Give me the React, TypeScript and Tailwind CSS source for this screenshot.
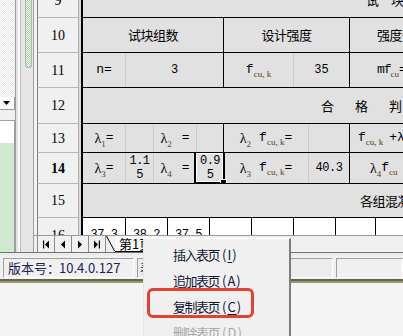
import React from "react";

const CJK = "font-['Noto_Sans_CJK_SC',sans-serif]";
const MONO = "font-['Liberation_Mono',monospace]";
const SERIF = "font-['Liberation_Serif',serif]";

function Sub({ children }: { children: React.ReactNode }) {
  return (
    <span className={`${SERIF} text-[9px] leading-none relative top-[4px] text-[#5a4020]`}>{children}</span>
  );
}

function Fcu({ k = true }: { k?: boolean }) {
  return (
    <span className="inline-flex items-baseline whitespace-nowrap">
      <span className={`${MONO} text-[13px]`}>f</span>
      <Sub>{k ? "cu, k" : "cu"}</Sub>
    </span>
  );
}

function Lam({ n }: { n: string }) {
  return (
    <span className="inline-flex items-baseline whitespace-nowrap">
      <span className={`${SERIF} text-[14px]`}>λ</span>
      <Sub>{n}</Sub>
    </span>
  );
}

function Row({
  h,
  num,
  bold,
  white,
  children,
}: {
  h: string;
  num: string;
  bold?: boolean;
  white?: boolean;
  children: React.ReactNode;
}) {
  return (
    <div className={`flex shrink-0 ${h}`}>
      <div
        className={`w-[42px] shrink-0 border-l border-l-[#7a7a7a] border-r border-r-[#b0b0b0] border-b border-b-[#b8b8b8] bg-[#f0f0f0] flex items-center justify-center ${SERIF} text-[14px] text-black ${bold ? "font-bold" : ""}`}
      >
        {num}
      </div>
      <div className="w-[2px] shrink-0 bg-[#dadada]" />
      <div className="w-[2px] shrink-0 bg-black" />
      <div className={`flex flex-1 min-w-0 overflow-hidden border-b border-black ${white ? "bg-white" : "bg-[#e1e1e1]"}`}>
        {children}
      </div>
    </div>
  );
}

const faint = "border-r border-r-[#cdcdcd]";
const black = "border-r border-r-black";
const cc = "shrink-0 flex items-center justify-center";

function NavBtn({ kind }: { kind: "first" | "prev" | "next" | "last" }) {
  return (
    <div className="w-[17px] shrink-0 h-full border-r border-r-[#8a8a8a] bg-[#f0f0f0] flex items-center justify-center">
      <svg width="8" height="9" viewBox="0 0 8 9">
        {kind === "first" && (
          <>
            <rect x="1" y="0.5" width="1.2" height="8" fill="#000" />
            <polygon points="7,0.5 7,8.5 3,4.5" fill="#000" />
          </>
        )}
        {kind === "prev" && <polygon points="6,0.5 6,8.5 2,4.5" fill="#000" />}
        {kind === "next" && <polygon points="2,0.5 2,8.5 6,4.5" fill="#000" />}
        {kind === "last" && (
          <>
            <polygon points="1,0.5 1,8.5 5,4.5" fill="#000" />
            <rect x="5.8" y="0.5" width="1.2" height="8" fill="#000" />
          </>
        )}
      </svg>
    </div>
  );
}

export default function App() {
  return (
    <div className={`relative w-[403px] h-[336px] overflow-hidden bg-[#f4f4f4] ${CJK}`}>
      {/* top section */}
      <div className="flex h-[252px]">
        {/* left panel */}
        <div className="w-[15px] shrink-0 flex flex-col">
          <div className="h-[97px] bg-[image:repeating-conic-gradient(#e6e6e6_0%_25%,#ffffff_0%_50%)] bg-[length:2px_2px]" />
          <div className="h-[13px] bg-white border-r border-b border-[#9a9a9a] flex items-center pl-[3px]">
            <svg width="7" height="4" viewBox="0 0 7 4">
              <polygon points="0,0 7,0 3.5,4" fill="#000" />
            </svg>
          </div>
          <div className="h-[10px] bg-[#f0f0f0]" />
          <div className="flex-1 flex flex-col border-t border-r border-[#a0a0a0]">
            <div className="h-[22px] bg-white" />
            <div className="flex-1 bg-[#d0e8d0]" />
          </div>
        </div>
        {/* splitter */}
        <div className="w-[5px] shrink-0 flex">
          <div className="w-[1px] bg-[#9c9c9c]" />
          <div className="w-[2px] bg-[#e2e2e2]" />
          <div className="w-[2px] bg-[#fbfbfb]" />
        </div>
        {/* scroll column */}
        <div className="w-[13px] shrink-0 flex border-l border-[#bdbdbd] bg-[#e6e6e6] pl-[4px]">
          <div className="w-[7px] h-[68px] rounded-b-[3px] border-x border-b border-[#a9b9a9] bg-[image:repeating-conic-gradient(#a8d4a8_0%_25%,#eef6ee_0%_50%)] bg-[length:2px_2px]" />
        </div>
        {/* sheet */}
        <div className="flex-1 min-w-0 flex flex-col">
          <div className="h-[235px] flex overflow-hidden">
            <div className="w-[4px] shrink-0 border-l border-[#a0a0a0] bg-[#f2f2f2]" />
            <div className="flex-1 min-w-0 flex flex-col overflow-hidden">
              {/* row 9 */}
              <Row h="h-[35px] -mt-[17px]" num="9">
                <div className={`flex-1 flex items-center pl-[283px] ${CJK} text-[13px] text-black whitespace-nowrap gap-[12px]`}>
                  <span>试</span>
                  <span>块</span>
                </div>
              </Row>
              {/* row 10 */}
              <Row h="h-[35px]" num="10">
                <div className={`w-[141px] ${cc} ${black} text-[13px] tracking-[-0.5px]`}>试块组数</div>
                <div className={`w-[126px] ${cc} ${black} text-[13px] tracking-[-0.5px]`}>设计强度</div>
                <div className="flex-1 flex items-center pl-[27px] text-[13px] tracking-[-0.5px] whitespace-nowrap">强度代表值</div>
              </Row>
              {/* row 11 */}
              <Row h="h-[35px]" num="11">
                <div className={`w-[43px] ${cc} ${faint} ${MONO} text-[13px]`}>n=</div>
                <div className={`w-[98px] ${cc} ${black} ${MONO} text-[12px]`}>3</div>
                <div className={`w-[70px] ${cc} ${faint}`}>
                  <Fcu />
                </div>
                <div className={`w-[56px] ${cc} ${black} ${MONO} text-[12px]`}>35</div>
                <div className="flex-1 flex items-center pl-[27px] whitespace-nowrap">
                  <span className={`${MONO} text-[13px] tracking-[-1px]`}>mf</span>
                  <Sub>cu</Sub>
                  <span className={`${MONO} text-[13px]`}>=</span>
                </div>
              </Row>
              {/* row 12 */}
              <Row h="h-[36px]" num="12">
                <div className="flex-1 flex items-center pl-[238px] gap-[21px] text-[13px] whitespace-nowrap">
                  <span>合</span>
                  <span>格</span>
                  <span>判</span>
                  <span>定</span>
                </div>
              </Row>
              {/* row 13 */}
              <Row h="h-[29px]" num="13">
                <div className={`w-[43px] ${cc} ${faint}`}>
                  <Lam n="1" />
                  <span className={`${MONO} text-[13px]`}>=</span>
                </div>
                <div className={`w-[28px] ${cc} ${faint}`} />
                <div className={`w-[43px] ${cc} ${faint} gap-[10px]`}>
                  <Lam n="2" />
                  <span className={`${MONO} text-[13px]`}>=</span>
                </div>
                <div className={`w-[27px] ${cc} ${black}`} />
                <div className={`w-[85px] ${cc} ${faint} gap-[8px]`}>
                  <Lam n="2" />
                  <span className="inline-flex items-baseline">
                    <Fcu />
                    <span className={`${MONO} text-[13px]`}>=</span>
                  </span>
                </div>
                <div className={`w-[41px] ${cc} ${black}`} />
                <div className="flex-1 flex items-center pl-[8px] whitespace-nowrap gap-[6px]">
                  <Fcu />
                  <span className={`${MONO} text-[13px]`}>+λ</span>
                </div>
              </Row>
              {/* row 14 */}
              <Row h="h-[31px]" num="14" bold>
                <div className={`w-[43px] ${cc} ${faint}`}>
                  <Lam n="3" />
                  <span className={`${MONO} text-[13px]`}>=</span>
                </div>
                <div className={`w-[28px] ${cc} ${faint} flex-col leading-[14px] ${MONO} text-[12px] tracking-[-0.5px]`}>
                  <span>1.1</span>
                  <span>5</span>
                </div>
                <div className={`w-[43px] ${cc} ${faint} gap-[10px]`}>
                  <Lam n="4" />
                  <span className={`${MONO} text-[13px]`}>=</span>
                </div>
                <div className={`w-[27px] ${cc} ${black} relative flex-col leading-[14px] ${MONO} text-[12px] tracking-[-0.5px]`}>
                  <span>0.9</span>
                  <span>5</span>
                  <div className="absolute left-[-3px] top-[-2px] right-[-2px] bottom-[-1px] border-2 border-black shadow-[inset_0_0_0_1px_#ffffff]" />
                  <div className="absolute right-[-3px] bottom-[-2px] w-[5px] h-[5px] bg-black outline outline-1 outline-white" />
                </div>
                <div className={`w-[85px] ${cc} ${faint} gap-[8px]`}>
                  <Lam n="3" />
                  <span className="inline-flex items-baseline">
                    <Fcu />
                    <span className={`${MONO} text-[13px]`}>=</span>
                  </span>
                </div>
                <div className={`w-[41px] ${cc} ${black} ${MONO} text-[12px] tracking-[-0.5px]`}>40.3</div>
                <div className="flex-1 flex items-center pl-[20px] whitespace-nowrap">
                  <Lam n="4" />
                  <Fcu k={false} />
                </div>
              </Row>
              {/* row 15 */}
              <Row h="h-[34px]" num="15">
                <div className="flex-1 flex items-center pl-[277px] text-[13px] tracking-[-0.5px] whitespace-nowrap">
                  各组混凝土强度值
                </div>
              </Row>
              {/* row 16 */}
              <Row h="h-[35px]" num="16" white>
                <div className={`w-[43px] ${cc} ${black} ${MONO} text-[12px] tracking-[-0.5px]`}>37.3</div>
                <div className={`w-[42px] ${cc} ${black} ${MONO} text-[12px] tracking-[-0.5px]`}>38.2</div>
                <div className={`w-[42px] ${cc} ${black} ${MONO} text-[12px] tracking-[-0.5px]`}>37.5</div>
                <div className={`w-[42px] ${cc} ${black}`} />
                <div className={`w-[42px] ${cc} ${black}`} />
                <div className={`w-[42px] ${cc} ${black}`} />
                <div className={`w-[40px] ${cc} ${black}`} />
                <div className="flex-1" />
              </Row>
            </div>
          </div>
          {/* tab bar */}
          <div className="h-[17px] flex border-t border-[#9a9a9a] bg-[#f0f0f0]">
            <div className="w-[4px] shrink-0 border-l border-[#a0a0a0]" />
            <div className="flex h-full border-l border-[#8a8a8a]">
              <NavBtn kind="first" />
              <NavBtn kind="prev" />
              <NavBtn kind="next" />
              <NavBtn kind="last" />
            </div>
            <svg width="9" height="16" viewBox="0 0 9 16" className="shrink-0">
              <line x1="0.5" y1="0" x2="8.5" y2="15" stroke="#000" strokeWidth="1" />
            </svg>
            <div className="h-full bg-[#fafafa] border-b border-black pl-[4px] pr-[6px] flex items-center text-[13px] leading-none whitespace-nowrap">
              第1页
            </div>
            <div className="flex-1" />
          </div>
        </div>
      </div>
      {/* separator under sheet */}
      <div className="h-[4px] border-t border-[#707070] bg-[#ececec]" />
      {/* status bar */}
      <div className="h-[23px] bg-[#f0f0f0] flex items-start pt-[2px] gap-[3px] pl-[3px]">
        <div className="w-[131px] h-[20px] shrink-0 border border-t-[#a0a0a0] border-l-[#a0a0a0] border-b-white border-r-white flex items-center pl-[4px] text-[13px] text-[#1b2250] whitespace-nowrap">
          版本号：<span className="-ml-[1px]">10.4.0.127</span>
        </div>
        <div className="w-[196px] h-[20px] shrink-0 border border-t-[#a0a0a0] border-l-[#a0a0a0] border-b-white border-r-white bg-[#ececec] flex items-center pl-[2px] text-[13px] text-[#1b2250] whitespace-nowrap overflow-hidden">
          表页数：1
        </div>
        <div className="flex-1 h-[20px] border border-t-[#a0a0a0] border-l-[#a0a0a0] border-b-white border-r-white bg-[#f0f0f0]" />
      </div>
      {/* olive line */}
      <div className="h-[2px] bg-[#64644c]" />
      <div className="h-[2px] bg-[#9a986c]" />

      {/* context menu */}
      <div className="absolute left-[143px] top-[238px] w-[148px] h-[100px] bg-[#f0f0f0] border-l border-t border-l-[#e4e4e4] border-t-white border-r-2 border-r-[#7c7c7c] pt-[3px] text-[13px] text-[#0f1530]">
        {[
          ["插入表页", "I", false],
          ["追加表页", "A", false],
          ["复制表页", "C", false],
          ["删除表页", "D", true],
        ].map(([t, k, dis]) => (
          <div
            key={t as string}
            className={`h-[26px] flex items-center pl-[29px] whitespace-nowrap tracking-[-1.5px] ${dis ? "text-[#a8a8a8]" : ""}`}
          >
            {t}
            <span className="ml-[3px] tracking-[1px]">
              (<span className="underline underline-offset-2">{k}</span>)
            </span>
          </div>
        ))}
        <div className="absolute left-[3px] top-[49px] w-[107px] h-[30px] border-[3px] border-[#e5412f] rounded-[6px]" />
      </div>
    </div>
  );
}
